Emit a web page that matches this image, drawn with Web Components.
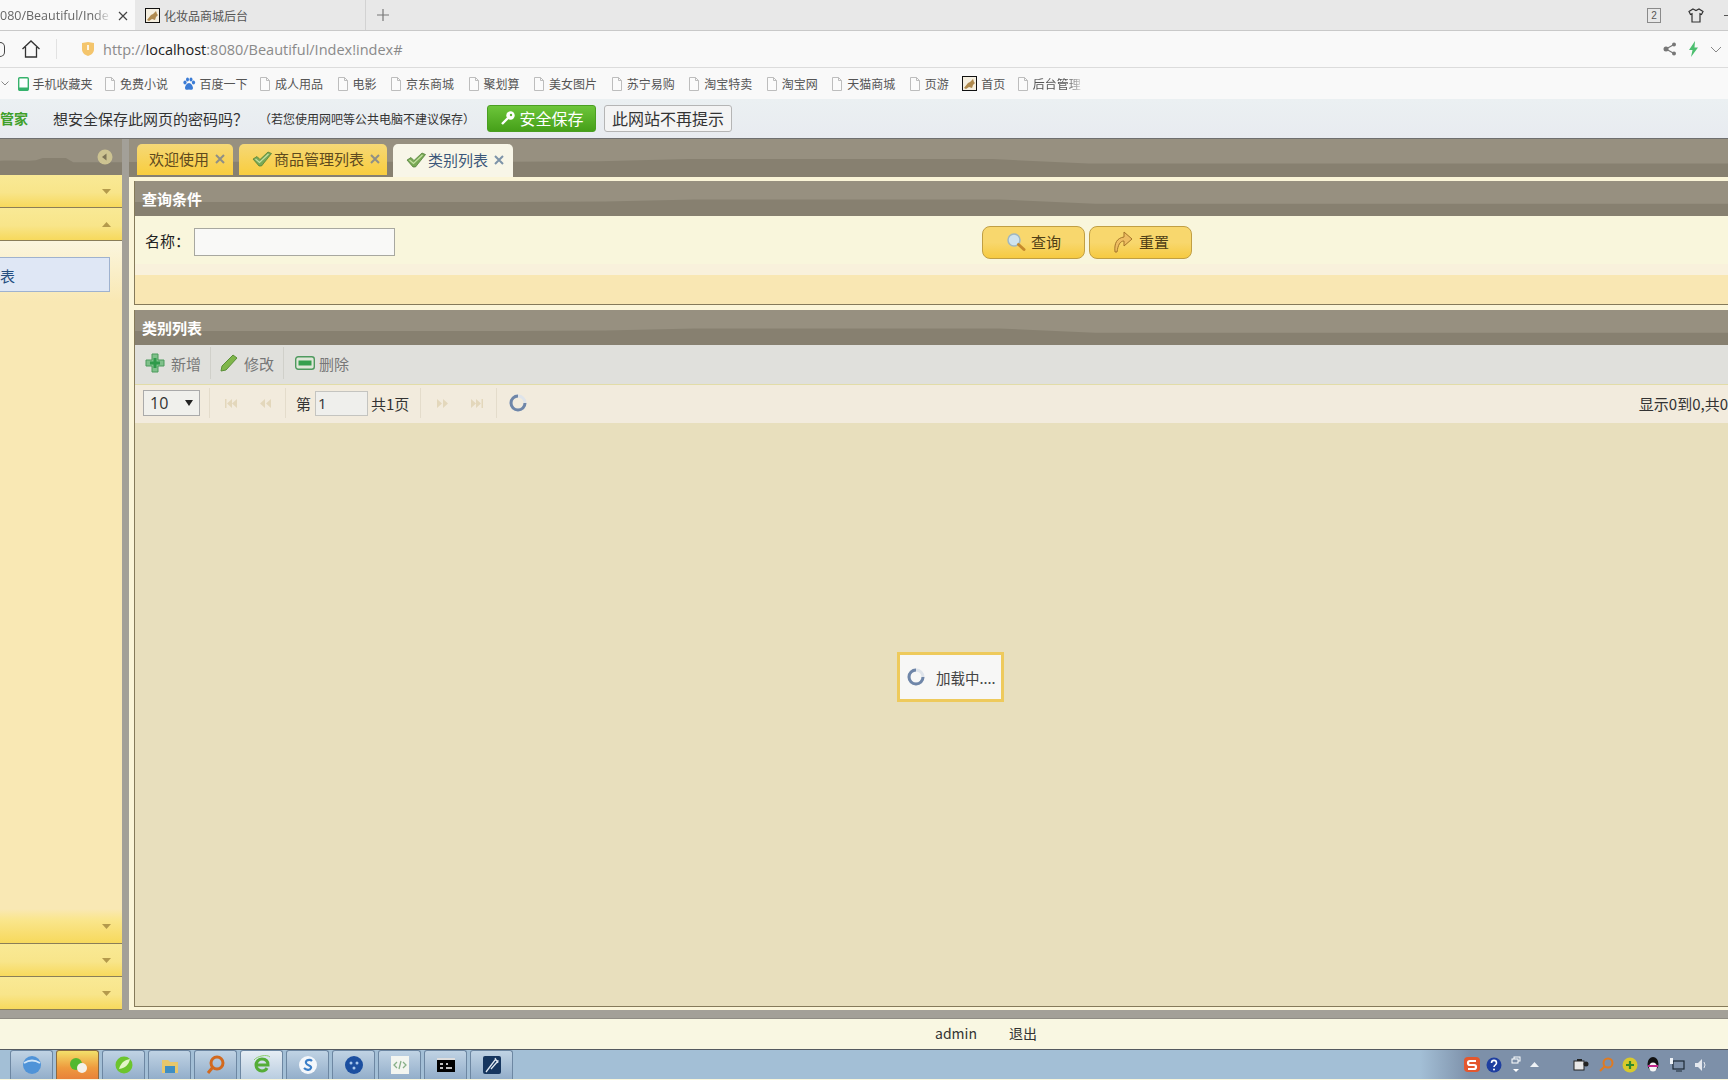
<!DOCTYPE html>
<html lang="zh-CN">
<head>
<meta charset="utf-8">
<title>化妆品商城后台</title>
<style>
  html, body { margin: 0; height: 100%; overflow: hidden; background: #f9f6dc; }
  body { font-family: "Noto Sans CJK SC", "Open Sans", sans-serif; font-size: 14px; color: #333; }
</style>
</head>
<body>
<app-shell>
  <browser-tabs slot="chrome"></browser-tabs>
  <address-bar slot="chrome"></address-bar>
  <bookmark-bar slot="chrome">
    <bookmark-item icon="phone" tight>手机收藏夹</bookmark-item>
    <bookmark-item>免费小说</bookmark-item>
    <bookmark-item icon="paw" tight>百度一下</bookmark-item>
    <bookmark-item>成人用品</bookmark-item>
    <bookmark-item>电影</bookmark-item>
    <bookmark-item>京东商城</bookmark-item>
    <bookmark-item>聚划算</bookmark-item>
    <bookmark-item>美女图片</bookmark-item>
    <bookmark-item>苏宁易购</bookmark-item>
    <bookmark-item>淘宝特卖</bookmark-item>
    <bookmark-item>淘宝网</bookmark-item>
    <bookmark-item>天猫商城</bookmark-item>
    <bookmark-item>页游</bookmark-item>
    <bookmark-item icon="cat" tight>首页</bookmark-item>
    <bookmark-item faded>后台管理</bookmark-item>
  </bookmark-bar>
  <save-bar slot="chrome"></save-bar>

  <app-sidebar slot="side"></app-sidebar>

  <tab-strip slot="tabs">
    <panel-tab>欢迎使用</panel-tab>
    <panel-tab check>商品管理列表</panel-tab>
    <panel-tab check active>类别列表</panel-tab>
  </tab-strip>

  <panel-box slot="work" heading="查询条件"><search-form></search-form></panel-box>
  <panel-box slot="work" heading="类别列表" grow>
    <grid-toolbar></grid-toolbar>
    <grid-pager></grid-pager>
    <grid-body></grid-body>
  </panel-box>

  <app-footer slot="footer"></app-footer>
  <task-bar slot="footer"></task-bar>
</app-shell>

<script>
const catIcon = `<svg width="15" height="15" viewBox="0 0 15 15"><rect x=".5" y=".5" width="14" height="14" fill="#f5efe0" stroke="#111"/><path d="M2 12l4-5 2-1 3-3 1 3 1 1-2 2-1 3-3-1-3 2z" fill="#b08a4e"/></svg>`

const docIcon = `<svg width="12" height="14" viewBox="0 0 12 14"><path d="M1.5 .5h6l3 3v10h-9z" fill="#fbfbfb" stroke="#bdbdbd"/><path d="M7.5 .5v3h3" fill="none" stroke="#bdbdbd"/></svg>`

const checkIcon = `<svg width="20" height="16" viewBox="0 0 20 16"><path d="M1 8l4-2.500 3 3L16 1l3.500 1.500L9.500 15H7z" fill="#79a956" stroke="#4c7a33" stroke-width=".7"/><path d="M3.500 8l4 3.500L16.500 3" fill="none" stroke="#c4e0a2" stroke-width="1.200"/></svg>`

const closeIcon = `<svg width="10" height="10" viewBox="0 0 10 10"><path d="M1 1l8 8M9 1l-8 8" stroke="currentColor" stroke-width="2"/></svg>`

const spinner = `<svg width="20" height="20" viewBox="0 0 20 20"><circle cx="10" cy="10" r="7" fill="none" stroke="#dfe4ea" stroke-width="3"/><path d="M10 3a7 7 0 1 0 7 7" fill="none" stroke="#6f86a8" stroke-width="3"/></svg>`

// the two-tone band behind the brown headers, its edge is a bit uneven
const wave = `<svg class="wave" viewBox="0 0 1000 34" preserveAspectRatio="none"><path d="M0 20.500C100 20 200 21 294 20L350 18H540L600 22H1000V34H0z" fill="#878070"/></svg>`
const waveCss = `.wave { position: absolute; left: 0; top: 0; width: 100%; height: 100%; }`

class AppShell extends HTMLElement {
  constructor() {
    super()
    this.attachShadow({ mode: 'open' })
    this.shadowRoot.innerHTML = `
      <style>
        :host { display: flex; flex-direction: column; width: 1728px; height: 1080px; overflow: hidden; }
        .main { display: flex; height: 871px; border-top: 1px solid #6f6f6f; box-sizing: content-box; }
        .split { width: 7px; flex: none; background: #a3a098; }
        .right { flex: 1; min-width: 0; display: flex; flex-direction: column; background: #fbf5d8; }
        .work { flex: 1; min-height: 0; display: flex; flex-direction: column; gap: 5px; padding: 4px 0 3px 5px; margin-right: -8px; }
        .band { height: 8px; background: #a3a098; flex: none; }
      </style>
      <slot name="chrome"></slot>
      <div class="main">
        <slot name="side"></slot>
        <div class="split"></div>
        <div class="right">
          <slot name="tabs"></slot>
          <div class="work"><slot name="work"></slot></div>
        </div>
      </div>
      <div class="band"></div>
      <slot name="footer"></slot>
    `
  }
}

class BrowserTabs extends HTMLElement {
  constructor() {
    super()
    this.attachShadow({ mode: 'open' })
    this.shadowRoot.innerHTML = `
      <style>
        :host { display: flex; align-items: stretch; height: 31px; box-sizing: border-box; background: #e8e8e8; border-bottom: 1px solid #c9c9c9; font-size: 12px; color: #555; overflow: hidden; }
        .on { width: 135px; flex: none; background: #f9f9f9; display: flex; align-items: center; justify-content: space-between; padding-right: 7px; box-sizing: border-box; margin-bottom: -1px; }
        .url { white-space: nowrap; font: 12.500px "Open Sans", sans-serif; color: #666; -webkit-mask-image: linear-gradient(90deg, #000 86%, rgba(0,0,0,.15)); mask-image: linear-gradient(90deg, #000 86%, rgba(0,0,0,.15)); }
        .off { width: 231px; flex: none; display: flex; align-items: center; gap: 4px; padding-left: 10px; box-sizing: border-box; border-right: 1px solid #d2d2d2; }
        .plus { margin-left: 10px; align-self: center; display: flex; }
        .end { margin-left: auto; display: flex; align-items: center; gap: 27px; }
        .num { width: 12px; height: 13px; border: 1px solid #8a8a8a; font: 10px "Liberation Sans", sans-serif; text-align: center; line-height: 13px; }
        .dash { width: 4px; height: 1px; background: #555; margin-left: -7px; }
        .x { color: #444; display: flex; }
      </style>
      <div class="on"><span class="url">080/Beautiful/Inde</span><span class="x"><svg width="10" height="10" viewBox="0 0 10 10"><path d="M1 1l8 8M9 1l-8 8" stroke="currentColor" stroke-width="1.2"/></svg></span></div>
      <div class="off">${catIcon}<span>化妆品商城后台</span></div>
      <span class="plus"><svg width="14" height="14" viewBox="0 0 14 14"><path d="M7 1v12M1 7h12" stroke="#777" stroke-width="1.2"/></svg></span>
      <div class="end">
        <span class="num">2</span>
        <svg width="16" height="15" viewBox="0 0 16 15"><path d="M5 1l3 1.500L11 1l4 2.500-1.500 3-1.500-.7V14H4V5.800l-1.500.7L1 3.500z" fill="none" stroke="#333" stroke-width="1.200"/></svg>
        <span class="dash"></span>
      </div>
    `
  }
}

class AddressBar extends HTMLElement {
  constructor() {
    super()
    this.attachShadow({ mode: 'open' })
    this.shadowRoot.innerHTML = `
      <style>
        :host { display: flex; align-items: center; height: 37px; box-sizing: border-box; background: #f9f9f9; border-bottom: 1px solid #dcdcdc; font: 14.500px "Open Sans", sans-serif; color: #8a8a8a; }
        .back { width: 4px; height: 13px; border: 1.500px solid #444; border-left: 0; border-radius: 0 7px 7px 0; flex: none; }
        .home { margin-left: 16px; display: flex; }
        .sep { width: 1px; height: 20px; background: #e2e2e2; margin: 0 24px 0 15px; }
        .url { margin-left: 8px; white-space: nowrap; }
        b { font-weight: 400; color: #222; }
        .end { margin-left: auto; display: flex; align-items: center; gap: 11px; padding-right: 6px; }
      </style>
      <span class="back"></span>
      <span class="home"><svg width="20" height="20" viewBox="0 0 20 20"><path d="M1.500 10L10 2l8.500 8M4.500 8v10h11V8" fill="none" stroke="#333" stroke-width="1.300"/></svg></span>
      <span class="sep"></span>
      <svg width="14" height="16" viewBox="0 0 14 16"><path d="M1 2l6-1 6 1v6c0 4-3 6-6 7-3-1-6-3-6-7z" fill="#f4c56c"/><rect x="6.200" y="4" width="1.600" height="5" fill="#fff"/></svg>
      <span class="url">http://<b>localhost</b>:8080/Beautiful/Index!index#</span>
      <div class="end">
        <svg width="14" height="14" viewBox="0 0 14 14"><path d="M11 2.500L3 7l8 4.500" fill="none" stroke="#777" stroke-width="1.200"/><circle cx="11" cy="2.500" r="2" fill="#777"/><circle cx="3" cy="7" r="2.500" fill="#777"/><circle cx="11" cy="11.500" r="2" fill="#777"/></svg>
        <svg width="11" height="16" viewBox="0 0 11 16"><path d="M7 0L1 9h3.500L3 16l7-9.500H6.500z" fill="#4cbf6f"/></svg>
        <svg width="12" height="7" viewBox="0 0 12 7"><path d="M1 1l5 5 5-5" fill="none" stroke="#888"/></svg>
      </div>
    `
  }
}

class BookmarkBar extends HTMLElement {
  constructor() {
    super()
    this.attachShadow({ mode: 'open' })
    this.shadowRoot.innerHTML = `
      <style>
        :host { display: flex; align-items: center; gap: 13.500px; height: 31px; box-sizing: border-box; background: #f9f9f9; padding-left: 1px; font-size: 12px; color: #555; overflow: hidden; }
      </style>
      <svg width="8" height="5" viewBox="0 0 8 5" style="margin-right:-5px"><path d="M.5.500L4 4 7.500.500" fill="none" stroke="#888"/></svg>
      <slot></slot>
    `
  }
}

class BookmarkItem extends HTMLElement {
  constructor() {
    super()
    this.attachShadow({ mode: 'open' })
    const kind = this.getAttribute('icon')
    let icon = docIcon
    if (kind === 'cat') icon = catIcon
    if (kind === 'phone') icon = `<svg width="11" height="14" viewBox="0 0 11 14"><rect x=".7" y=".7" width="9.600" height="12.600" rx="1" fill="#fff" stroke="#37b26c" stroke-width="1.400"/><rect x="1" y="10.500" width="9" height="3" fill="#37b26c"/></svg>`
    if (kind === 'paw') icon = `<svg width="14" height="14" viewBox="0 0 14 14" fill="#3a7bd5"><ellipse cx="3" cy="5.500" rx="1.600" ry="2"/><ellipse cx="5.500" cy="2.500" rx="1.500" ry="2"/><ellipse cx="9" cy="2.500" rx="1.500" ry="2"/><ellipse cx="11.500" cy="5.500" rx="1.600" ry="2"/><path d="M7 6c-2 0-4 3-4 5s2 2 4 1.500c2 .5 4 .5 4-1.500s-2-5-4-5z"/></svg>`
    this.shadowRoot.innerHTML = `
      <style>
        :host { display: inline-flex; align-items: center; gap: 4px; white-space: nowrap; flex: none; }
        :host([tight]) { margin-right: -2px; }
        :host([faded]) .t { -webkit-mask-image: linear-gradient(90deg, #000 70%, rgba(0,0,0,.25)); mask-image: linear-gradient(90deg, #000 70%, rgba(0,0,0,.25)); }
        svg { flex: none; }
      </style>
      ${icon}<span class="t"><slot></slot></span>
    `
  }
}

class SaveBar extends HTMLElement {
  constructor() {
    super()
    this.attachShadow({ mode: 'open' })
    this.shadowRoot.innerHTML = `
      <style>
        :host { display: flex; align-items: center; height: 39px; box-sizing: border-box; background: linear-gradient(#ebf0f2, #e8ebf0); font-size: 15px; color: #333; padding-bottom: 1px; white-space: nowrap; }
        .brand { color: #3fa02a; font-weight: 700; font-size: 14px; }
        .ask { margin-left: 25px; }
        .hint { margin-left: 11px; font-size: 12px; }
        button { font-family: inherit; font-size: 16px; height: 27px; padding: 0; border-radius: 3px; display: flex; align-items: center; justify-content: center; gap: 4px; }
        .ok { width: 109px; margin-left: 12px; color: #fff; background: linear-gradient(#6cc53a, #46a019); border: 1px solid #4a9f22; }
        .no { width: 128px; margin-left: 8px; color: #333; background: #f4f4f4; border: 1px solid #b5b5b5; }
      </style>
      <span class="brand">管家</span>
      <span class="ask">想安全保存此网页的密码吗？</span>
      <span class="hint">（若您使用网吧等公共电脑不建议保存）</span>
      <button class="ok"><svg width="16" height="16" viewBox="0 0 16 16"><circle cx="10.500" cy="5.500" r="4.200" fill="#fff"/><path d="M8 8l-6 6" stroke="#fff" stroke-width="2.400"/><circle cx="11" cy="5" r="1.200" fill="#5cb52e"/></svg>安全保存</button>
      <button class="no">此网站不再提示</button>
    `
  }
}

class AppSidebar extends HTMLElement {
  constructor() {
    super()
    this.attachShadow({ mode: 'open' })
    this.shadowRoot.innerHTML = `
      <style>
        :host { display: flex; flex-direction: column; width: 122px; flex: none; background: #f9e8b4; overflow: hidden; }
        .top { position: relative; height: 36px; flex: none; background: #979080; display: flex; align-items: center; justify-content: flex-end; padding-right: 9px; box-sizing: border-box; }
        .top > svg:last-child { position: relative; }
        ${waveCss}
        .body { flex: 1; min-height: 0; background: linear-gradient(#fbf6de 0, #f9e8b4 60px); padding-top: 16px; box-sizing: border-box; }
        .sel { height: 35px; width: 110px; box-sizing: border-box; background: #dfe7f5; border: 1px solid #9fb2cf; border-left: 0; display: flex; align-items: center; padding-top: 2px; }
        .sel span { color: #254f80; font-size: 15px; }
      </style>
      <div class="top">${wave}<svg width="16" height="16" viewBox="0 0 16 16"><circle cx="8" cy="8" r="7.500" fill="#cdc391"/><path d="M9.500 4.500v7L5 8z" fill="#7d7457"/></svg></div>
      <accordion-head></accordion-head>
      <accordion-head open></accordion-head>
      <div class="body"><div class="sel"><span>表</span></div></div>
      <accordion-head tall></accordion-head>
      <accordion-head></accordion-head>
      <accordion-head></accordion-head>
    `
  }
}

class AccordionHead extends HTMLElement {
  constructor() {
    super()
    this.attachShadow({ mode: 'open' })
    const arrow = this.hasAttribute('open') ? 'M1 6l4.500-5L10 6z' : 'M1 1h9L5.500 6z'
    this.shadowRoot.innerHTML = `
      <style>
        :host { display: flex; align-items: center; justify-content: flex-end; height: 33px; flex: none; box-sizing: border-box; padding-right: 10px; background: linear-gradient(#f9e995, #f8e58a 55%, #f7d95c); border-bottom: 1px solid #8a7e58; }
        :host([tall]) { height: 35px; background: linear-gradient(#f9e8b4 0, #fae68e 30%, #f7d95c); }
      </style>
      <svg width="11" height="7" viewBox="0 0 11 7"><path d="${arrow}" fill="#b49a4c"/></svg>
    `
  }
}

class TabStrip extends HTMLElement {
  constructor() {
    super()
    this.attachShadow({ mode: 'open' })
    this.shadowRoot.innerHTML = `
      <style>
        :host { position: relative; display: flex; align-items: flex-end; gap: 6px; height: 38px; flex: none; box-sizing: border-box; padding-left: 8px; background: #979080; }
        ${waveCss}
        ::slotted(*) { position: relative; }
      </style>
      ${wave}
      <slot></slot>
    `
  }
}

class PanelTab extends HTMLElement {
  constructor() {
    super()
    this.attachShadow({ mode: 'open' })
    this.shadowRoot.innerHTML = `
      <style>
        :host { display: inline-flex; align-items: center; height: 31px; box-sizing: border-box; padding: 0 8px 2px 12px; border-radius: 5px 5px 0 0; background: linear-gradient(#f5d877, #f9cd3d); font-size: 15px; color: #5e4a1e; white-space: nowrap; margin-bottom: 2px; }
        :host([check]) { padding-left: 13px; padding-right: 7px; }
        :host([active]) { background: #f8f6e8; color: #3d587a; height: 33px; margin-bottom: 0; padding-right: 9px; }
        .c { color: #8f8f86; display: flex; margin-left: 6px; }
        :host([active]) .c { color: #7d93a8; }
        .k { display: flex; margin-right: 2px; }
      </style>
      ${this.hasAttribute('check') ? `<span class="k">${checkIcon}</span>` : ''}
      <slot></slot>
      <span class="c">${closeIcon}</span>
    `
  }
}

class PanelBox extends HTMLElement {
  constructor() {
    super()
    this.attachShadow({ mode: 'open' })
    this.shadowRoot.innerHTML = `
      <style>
        :host { display: flex; flex-direction: column; flex: none; box-sizing: border-box; border: 1px solid #857a5a; border-top: 0; }
        :host([grow]) { flex: 1; min-height: 0; }
        .head { position: relative; height: 35px; flex: none; box-sizing: border-box; padding-left: 7px; line-height: 35px; background: #979080; color: #fff; font-weight: 700; font-size: 15px; }
        .head span { position: relative; }
        ${waveCss}
        .inner { flex: 1; min-height: 0; display: flex; flex-direction: column; }
      </style>
      <div class="head">${wave}<span>${this.getAttribute('heading') ?? ''}</span></div>
      <div class="inner"><slot></slot></div>
    `
  }
}

class SearchForm extends HTMLElement {
  constructor() {
    super()
    this.attachShadow({ mode: 'open' })
    this.shadowRoot.innerHTML = `
      <style>
        :host { display: block; height: 88px; background: linear-gradient(#f9f6dc 0 48px, #f9f1dc 48px 59px, #f9e7b3 59px); }
        .row { display: flex; align-items: center; height: 28px; padding-top: 12px; }
        label { margin: -3px 0 0 10px; font-size: 15px; color: #222; width: 49px; }
        input { width: 201px; height: 28px; box-sizing: border-box; border: 1px solid #a8a8a0; background: #f9f9f7; padding: 0; }
        .btns { display: flex; gap: 4px; margin-left: 587px; }
      </style>
      <div class="row">
        <label>名称：</label><input type="text">
        <div class="btns">
          <search-button icon="find">查询</search-button>
          <search-button icon="undo">重置</search-button>
        </div>
      </div>
    `
  }
}

class SearchButton extends HTMLElement {
  constructor() {
    super()
    this.attachShadow({ mode: 'open' })
    const icon = this.getAttribute('icon') === 'find'
      ? `<svg width="20" height="20" viewBox="0 0 20 20"><circle cx="8" cy="8" r="6" fill="#cfe3ef" stroke="#9fb7c2" stroke-width="1.500"/><path d="M12.500 12.500l5.500 5" stroke="#c68a2c" stroke-width="3" stroke-linecap="round"/></svg>`
      : `<svg width="22" height="22" viewBox="0 0 22 22"><path d="M3 21C2 12 5 7 12 6V1l8 7-8 7v-5C8 10 6 14 5 21z" fill="#eebd62" stroke="#a5752a"/></svg>`
    this.shadowRoot.innerHTML = `
      <style>
        :host { display: inline-flex; align-items: center; justify-content: center; gap: 5px; width: 103px; height: 33px; box-sizing: border-box; padding-bottom: 1px; border: 1px solid #c19f43; border-radius: 8px; background: linear-gradient(#f8d76d 0 50%, #f6ca41); font-size: 15px; color: #4f3f15; }
      </style>
      ${icon}<slot></slot>
    `
  }
}

class GridToolbar extends HTMLElement {
  constructor() {
    super()
    this.attachShadow({ mode: 'open' })
    this.shadowRoot.innerHTML = `
      <style>
        :host { display: flex; align-items: center; height: 40px; flex: none; box-sizing: border-box; background: #e0e0dc; border-bottom: 1px solid #e2dca8; padding: 0 0 3px 10px; font-size: 15px; color: #777; }
        span { display: inline-flex; align-items: center; gap: 6px; height: 32px; padding-right: 9px; margin-right: 11px; border-right: 1px solid #d0d0ca; }
        span:nth-child(2) { margin-right: 9px; }
        span:last-child { border: 0; gap: 4px; }
      </style>
      <span><svg width="20" height="20" viewBox="0 0 20 20"><path d="M7 1h6v6h6v6h-6v6H7v-6H1V7h6z" fill="#7fc08a" stroke="#4a9a5a"/><path d="M8.500 5h3v3.500H15v3h-3.500V15h-3v-3.500H5v-3h3.500z" fill="#2f9a4a"/></svg>新增</span>
      <span><svg width="18" height="18" viewBox="0 0 18 18"><path d="M13 1l4 3L6 16l-5 1 1-5z" fill="#7fb64a" stroke="#5a8f37"/></svg>修改</span>
      <span><svg width="20" height="14" viewBox="0 0 20 14"><rect x=".7" y=".7" width="18.600" height="12.600" rx="2.500" fill="#dfe6d8" stroke="#4f9a5f" stroke-width="1.400"/><rect x="3.500" y="4.500" width="13" height="5" fill="#36a04e"/></svg>删除</span>
    `
  }
}

class GridPager extends HTMLElement {
  constructor() {
    super()
    this.attachShadow({ mode: 'open' })
    const nav = (d) => `<svg width="14" height="9" viewBox="0 0 14 9"><path d="${d}" fill="#e3d7bb"/></svg>`
    this.shadowRoot.innerHTML = `
      <style>
        :host { display: flex; align-items: center; height: 38px; flex: none; box-sizing: border-box; background: #f2ebdd; padding: 0 0 2px 8px; font-size: 15px; color: #333; white-space: nowrap; }
        .size { width: 57px; height: 26px; box-sizing: border-box; border: 1px solid #aaa; background: #f0f0ec; display: flex; align-items: center; justify-content: space-between; padding: 0 6px; font: 16px "Open Sans", sans-serif; flex: none; }
        .size i { width: 0; height: 0; border: 4px solid transparent; border-top: 6px solid #222; border-bottom: 0; }
        .sep { width: 1px; height: 30px; background: #e4dccb; margin: 0 9px; flex: none; }
        .sep.wide { margin: 0 10px; }
        .nav { display: flex; gap: 20px; align-items: center; padding: 0 3px 0 5px; }
        .page { width: 53px; height: 25px; box-sizing: border-box; border: 1px solid #c4c4c0; background: #efefec; padding-left: 2px; font: 15px/23px "Open Sans", sans-serif; margin: 0 3px 0 4px; color: #333; }
        .info { margin-left: auto; padding-right: 7px; }
        .tail { margin-left: 2px; }
      </style>
      <div class="size">10<i></i></div>
      <span class="sep"></span>
      <div class="nav">${nav('M1 0h1.500v9H1zM8 0v9L3 4.500zM13 0v9L8 4.500z')}${nav('M7 0v9L2 4.500zM13 0v9L8 4.500z')}</div>
      <span class="sep wide"></span>
      第<div class="page">1</div><span>共1页</span>
      <span class="sep wide" style="margin-left:11px"></span>
      <div class="nav">${nav('M1 0v9l5-4.500zM7 0v9l5-4.500z')}${nav('M1 0v9l5-4.500zM6 0v9l5-4.500zM11.500 0H13v9h-1.500z')}</div>
      <span class="sep"></span>
      <span style="margin-left:2px;display:flex">${spinner}</span>
      <span class="info">显示0到0,共0</span>
    `
  }
}

class GridBody extends HTMLElement {
  constructor() {
    super()
    this.attachShadow({ mode: 'open' })
    this.shadowRoot.innerHTML = `
      <style>
        :host { display: block; flex: 1; min-height: 0; background: #e8dfbd; position: relative; }
        .mask { position: absolute; left: 762px; top: 229px; width: 107px; height: 50px; box-sizing: border-box; border: 3px solid #eeca5c; background: #f7f7f6; display: flex; align-items: center; gap: 10px; padding-left: 6px; font-size: 14.500px; color: #444; white-space: nowrap; }
      </style>
      <div class="mask">${spinner}<span>加载中....</span></div>
    `
  }
}

class AppFooter extends HTMLElement {
  constructor() {
    super()
    this.attachShadow({ mode: 'open' })
    this.shadowRoot.innerHTML = `
      <style>
        :host { display: flex; align-items: center; height: 31px; flex: none; box-sizing: border-box; background: #f9f7e2; padding: 0 0 2px 935px; gap: 32px; font-size: 14px; color: #333; border-top: 1px solid #8f8c84; }
      </style>
      <span>admin</span><span>退出</span>
    `
  }
}

class TaskBar extends HTMLElement {
  constructor() {
    super()
    this.attachShadow({ mode: 'open' })
    const icons = [
      `<circle cx="11" cy="11" r="9" fill="#4f93d8"/><path d="M3 9c5-3 11-3 16 0" stroke="#cfe4f7" fill="none" stroke-width="2"/>`,
      `<circle cx="9" cy="10" r="6" fill="#52b82f"/><circle cx="15" cy="14" r="5" fill="#f4f1ea"/>`,
      `<circle cx="11" cy="11" r="8.500" fill="#6cc52e"/><path d="M6 15c2-7 6-9 11-10-1 5-4 9-11 10z" fill="#e4f5c8"/>`,
      `<path d="M3 6h6l2 2h8v11H3z" fill="#e7c76c"/><rect x="6" y="12" width="10" height="7" fill="#3f8ec2"/>`,
      `<circle cx="12" cy="9" r="6" fill="none" stroke="#d2691e" stroke-width="3"/><path d="M8 13l-5 6" stroke="#d2691e" stroke-width="3"/>`,
      `<path d="M5 11h12c0-4-2.500-6-6-6s-6 3-6 6 2.500 6 6 6c2.500 0 4-1 5-3" fill="none" stroke="#55ad38" stroke-width="3"/><path d="M3 6c3-4 13-6 16-3" fill="none" stroke="#8ccf6d"/>`,
      `<circle cx="11" cy="11" r="9" fill="#f4f7fb"/><path d="M15 7c-2-2-7-1-6 2s6 2 5 5-5 2-7 0" fill="none" stroke="#3c7fc8" stroke-width="2.200"/>`,
      `<circle cx="11" cy="11" r="9" fill="#1c4fa0"/><circle cx="8" cy="9" r="1.500" fill="#a8c8ee"/><circle cx="14" cy="9" r="1.500" fill="#a8c8ee"/><circle cx="11" cy="14" r="1.500" fill="#a8c8ee"/>`,
      `<rect x="2" y="2" width="18" height="18" fill="#f3f5f0"/><path d="M8 8l-3 3 3 3M14 8l3 3-3 3M12 7l-2 8" fill="none" stroke="#88b088" stroke-width="1.300"/>`,
      `<rect x="2" y="4" width="18" height="14" fill="#000"/><rect x="2" y="4" width="18" height="2" fill="#ddd"/><path d="M5 10h3M5 14h3M11 10h2M11 14h6" stroke="#fff" stroke-width="1.500"/>`,
      `<rect x="2" y="2" width="18" height="18" rx="2" fill="#16365f"/><path d="M5 18L14 6l3 1-7 8M14 4l3 5" fill="none" stroke="#dfe8f2" stroke-width="1.300"/>`
    ]
    const buttons = icons.map((d, i) => {
      const cls = ['b']
      if (i === 1) cls.push('hot')
      if (i === 5) cls.push('lit')
      return `<span class="${cls.join(' ')}"><svg width="22" height="22" viewBox="0 0 22 22">${d}</svg></span>`
    }).join('')
    this.shadowRoot.innerHTML = `
      <style>
        :host { display: flex; align-items: stretch; height: 30px; flex: none; box-sizing: border-box; background: linear-gradient(90deg, #a3bfd6 0, #a3bfd6 1420px, #7d90a9 1470px); border-top: 1px solid #55595f; padding-left: 10px; gap: 3px; overflow: hidden; }
        .b { width: 43px; box-sizing: border-box; display: flex; align-items: center; justify-content: center; border: 1px solid #6d87a2; border-bottom: 0; border-radius: 3px 3px 0 0; background: linear-gradient(#c0d3e4, #93aeca); }
        .hot { background: linear-gradient(#f3e06a, #ee9a3e 60%, #e8823a); border-color: #8a6b42; }
        .lit { background: linear-gradient(#e6edf4, #b9cde0); }
        .tray { margin-left: auto; display: flex; align-items: center; padding-right: 20px; }
        .tray > * { flex: none; }
      </style>
      ${buttons}
      <div class="tray">
        <svg width="16" height="16" viewBox="0 0 16 16"><rect width="16" height="15" rx="4" fill="#e4572e"/><path d="M12 4H6Q4 4 4 6t2 2h4q2 0 2 2t-2 2H4" fill="none" stroke="#fff" stroke-width="2.200"/></svg>
        <svg width="16" height="16" viewBox="0 0 16 16" style="margin-left:6px"><circle cx="8" cy="8" r="7.500" fill="#1f3fa0"/><path d="M5.500 6c0-3.500 5-3.500 5 0 0 2-2.500 2-2.500 4" fill="none" stroke="#fff" stroke-width="1.600"/><circle cx="8" cy="12.500" r="1" fill="#fff"/></svg>
        <svg width="10" height="18" viewBox="0 0 10 18" style="margin-left:9px"><rect x="3" y="1" width="6" height="4" fill="none" stroke="#fff"/><rect x="1" y="3" width="6" height="4" fill="#7d90a9" stroke="#fff"/><path d="M2 13h6l-3 3z" fill="#fff"/></svg>
        <svg width="9" height="5" viewBox="0 0 9 5" style="margin-left:9px"><path d="M0 5l4.500-5L9 5z" fill="#eef2f6"/></svg>
        <svg width="16" height="14" viewBox="0 0 16 14" style="margin-left:34px"><rect x="1" y="3" width="10" height="9" fill="#e8e8e8" stroke="#222"/><circle cx="13" cy="6" r="2.500" fill="#222"/><path d="M4 1h5v2H4z" fill="#222"/></svg>
        <svg width="16" height="16" viewBox="0 0 16 16" style="margin-left:9px"><circle cx="10" cy="6" r="4.500" fill="none" stroke="#e07a20" stroke-width="2"/><path d="M7 9l-5 5" stroke="#e07a20" stroke-width="2.200"/></svg>
        <svg width="16" height="16" viewBox="0 0 16 16" style="margin-left:8px"><circle cx="8" cy="8" r="7.500" fill="#d8c92c"/><path d="M8 4v8M4 8h8" stroke="#2f8a2c" stroke-width="2.200"/></svg>
        <svg width="16" height="18" viewBox="0 0 16 18" style="margin-left:7px"><ellipse cx="8" cy="8" rx="5.500" ry="7" fill="#111"/><ellipse cx="8" cy="11" rx="4" ry="4.500" fill="#f5f5f5"/><path d="M3 9h10v2H3z" fill="#c0268a"/></svg>
        <svg width="16" height="16" viewBox="0 0 16 16" style="margin-left:8px"><rect x="4" y="4" width="11" height="8" fill="none" stroke="#1d2a36" stroke-width="1.200"/><rect x="1" y="1" width="3" height="6" fill="#eef2f6"/><path d="M7 14h6" stroke="#1d2a36"/></svg>
        <svg width="14" height="14" viewBox="0 0 14 14" style="margin-left:9px"><path d="M1 5h3l4-4v12L4 9H1z" fill="#e4e8ee"/><path d="M10 4q2 3 0 6" fill="none" stroke="#e4e8ee"/></svg>
      </div>
    `
  }
}

customElements.define('app-shell', AppShell)
customElements.define('browser-tabs', BrowserTabs)
customElements.define('address-bar', AddressBar)
customElements.define('bookmark-bar', BookmarkBar)
customElements.define('bookmark-item', BookmarkItem)
customElements.define('save-bar', SaveBar)
customElements.define('app-sidebar', AppSidebar)
customElements.define('accordion-head', AccordionHead)
customElements.define('tab-strip', TabStrip)
customElements.define('panel-tab', PanelTab)
customElements.define('panel-box', PanelBox)
customElements.define('search-form', SearchForm)
customElements.define('search-button', SearchButton)
customElements.define('grid-toolbar', GridToolbar)
customElements.define('grid-pager', GridPager)
customElements.define('grid-body', GridBody)
customElements.define('app-footer', AppFooter)
customElements.define('task-bar', TaskBar)
</script>
</body>
</html>
